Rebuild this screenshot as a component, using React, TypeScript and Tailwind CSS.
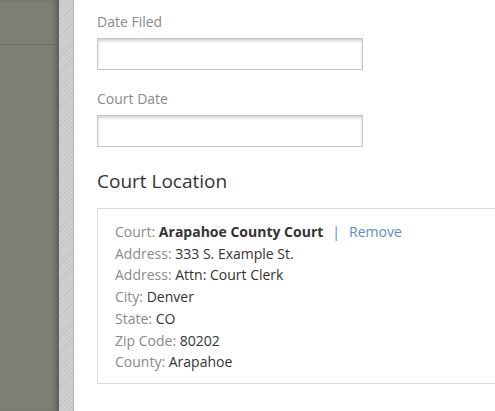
const rows: [string, string][] = [
  ["Address:", "333 S. Example St."],
  ["Address:", "Attn: Court Clerk"],
  ["City:", "Denver"],
  ["State:", "CO"],
  ["Zip Code:", "80202"],
  ["County:", "Arapahoe"],
];

function Field({ label }: { label: string }) {
  return (
    <div className="mb-[19px]">
      <label className="block text-[14px] leading-[20px] text-[#8a8a8a] mb-[6px]">
        {label}
      </label>
      <input
        type="text"
        className="block h-[32px] w-[266px] border border-[#c6c6c6] bg-white shadow-[inset_0_2px_3px_rgba(0,0,0,0.18)] outline-none"
      />
    </div>
  );
}

export default function App() {
  return (
    <div
      className="flex h-[411px] w-[495px] overflow-hidden bg-white"
      style={{ fontFamily: '"Open Sans", "Liberation Sans", sans-serif' }}
    >
      {/* sidebar */}
      <div className="flex w-[59px] shrink-0 flex-col bg-[#7e7d76] shadow-[inset_-5px_0_6px_-3px_rgba(0,0,0,0.35)]">
        <div className="h-[45px] border-b border-[#6a6963]" />
      </div>
      <div className="w-[15px] shrink-0 border-r border-[#b4b4b4] bg-[#cacaca] bg-[repeating-linear-gradient(135deg,#d0d0d0_0px,#d0d0d0_2px,#c4c4c4_2px,#c4c4c4_3px)]" />

      {/* content */}
      <div className="flex-1 pl-[23px] pt-[12px]">
        <Field label="Date Filed" />
        <Field label="Court Date" />

        <h2 className="pt-[2px] text-[19px] leading-[26px] text-[#333]">Court Location</h2>

        <div className="mt-[14px] -mr-[20px] border border-[#dcdcdc] pl-[17px] pt-[12px] pb-[10px] text-[14px] leading-[21.7px]">
          <div>
            <span className="text-[#8a8a8a]">Court: </span>
            <span className="font-bold text-[#333]">Arapahoe County Court</span>
            <span className="mx-[9px] text-[#5a8ec6]">|</span>
            <a className="text-[#5a8ec6]">Remove</a>
          </div>
          {rows.map(([k, v], i) => (
            <div key={i}>
              <span className="text-[#8a8a8a]">{k} </span>
              <span className="text-[#333]">{v}</span>
            </div>
          ))}
        </div>
      </div>
    </div>
  );
}
